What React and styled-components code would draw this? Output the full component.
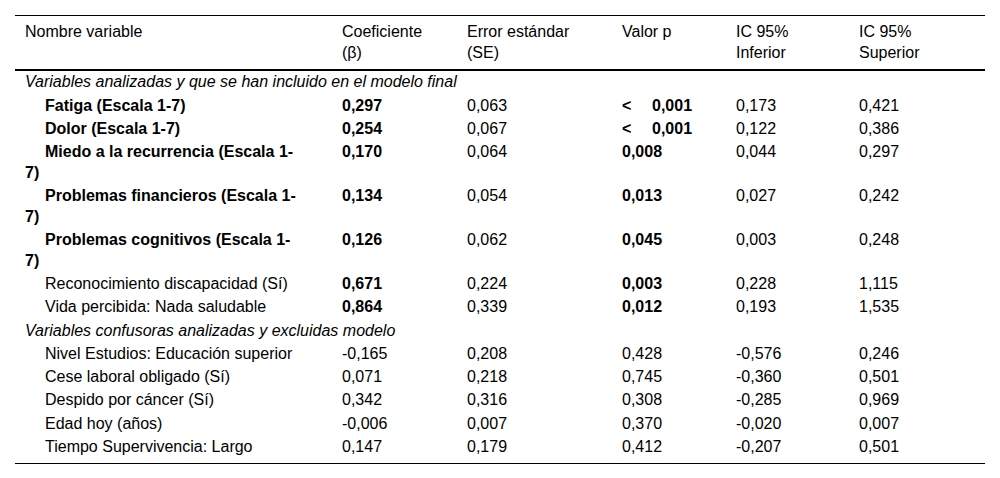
import React from 'react';
import styled, { createGlobalStyle } from 'styled-components';

const GlobalStyle = createGlobalStyle`
  html, body {
    margin: 0;
    padding: 0;
    background: #ffffff;
  }
  body {
    font-family: "Liberation Sans", Arial, sans-serif;
    color: #000000;
  }
`;

const Page = styled.div`
  padding: 15px 15px 0 15px;
  width: 1000px;
  box-sizing: border-box;
`;

const Table = styled.table`
  width: 970px;
  border-collapse: collapse;
  table-layout: fixed;
  font-size: 16px;
  line-height: 20.75px;
  border-top: 1px solid #000;
  border-bottom: 1px solid #000;
`;

const HeadCell = styled.th`
  text-align: left;
  font-weight: normal;
  vertical-align: top;
  padding: 5px 10px 6px 10px;
  border-bottom: 2px solid #000;
  line-height: 21px;
`;

const Cell = styled.td`
  vertical-align: top;
  padding: 1.25px 10px;
  font-weight: ${(p) => (p.$bold ? 'bold' : 'normal')};
  text-indent: ${(p) => (p.$indent ? '20px' : '0')};
  padding-right: ${(p) => (p.$indent ? '31px' : '10px')};
  white-space: ${(p) => (p.$nowrap ? 'nowrap' : 'normal')};
`;

const GroupCell = styled.td`
  font-style: italic;
  padding: 1.25px 10px;
  white-space: nowrap;
`;

const LastRow = styled.tr`
  td {
    padding-bottom: 5px;
  }
`;

const Less = styled.span`
  display: inline-block;
  width: 30px;
  text-indent: 0;
`;

const widths = [317, 125, 155, 114, 123, 136];

const finalRows = [
  { name: 'Fatiga (Escala 1-7)', b: true, coef: '0,297', se: '0,063', p: '0,001', lt: true, lo: '0,173', hi: '0,421' },
  { name: 'Dolor (Escala 1-7)', b: true, coef: '0,254', se: '0,067', p: '0,001', lt: true, lo: '0,122', hi: '0,386' },
  { name: 'Miedo a la recurrencia (Escala 1-7)', b: true, coef: '0,170', se: '0,064', p: '0,008', lo: '0,044', hi: '0,297' },
  { name: 'Problemas financieros (Escala 1-7)', b: true, coef: '0,134', se: '0,054', p: '0,013', lo: '0,027', hi: '0,242' },
  { name: 'Problemas cognitivos (Escala 1-7)', b: true, coef: '0,126', se: '0,062', p: '0,045', lo: '0,003', hi: '0,248' },
  { name: 'Reconocimiento discapacidad (Sí)', coef: '0,671', se: '0,224', p: '0,003', lo: '0,228', hi: '1,115' },
  { name: 'Vida percibida: Nada saludable', coef: '0,864', se: '0,339', p: '0,012', lo: '0,193', hi: '1,535' },
];

const excludedRows = [
  { name: 'Nivel Estudios: Educación superior', coef: '-0,165', se: '0,208', p: '0,428', lo: '-0,576', hi: '0,246' },
  { name: 'Cese laboral obligado (Sí)', coef: '0,071', se: '0,218', p: '0,745', lo: '-0,360', hi: '0,501' },
  { name: 'Despido por cáncer (Sí)', coef: '0,342', se: '0,316', p: '0,308', lo: '-0,285', hi: '0,969' },
  { name: 'Edad hoy (años)', coef: '-0,006', se: '0,007', p: '0,370', lo: '-0,020', hi: '0,007' },
  { name: 'Tiempo Supervivencia: Largo', coef: '0,147', se: '0,179', p: '0,412', lo: '-0,207', hi: '0,501' },
];

function DataCells({ r, significant }) {
  return (
    <>
      <Cell $indent $bold={r.b}>{r.name}</Cell>
      <Cell $bold={significant}>{r.coef}</Cell>
      <Cell>{r.se}</Cell>
      <Cell $bold={significant} $nowrap>
        {r.lt && <Less>&lt;</Less>}
        {r.p}
      </Cell>
      <Cell>{r.lo}</Cell>
      <Cell>{r.hi}</Cell>
    </>
  );
}

export default function App() {
  return (
    <Page>
      <GlobalStyle />
      <Table>
        <colgroup>
          {widths.map((w, i) => (
            <col key={i} style={{ width: w }} />
          ))}
        </colgroup>
        <thead>
          <tr>
            <HeadCell>Nombre variable</HeadCell>
            <HeadCell>Coeficiente<br />(β)</HeadCell>
            <HeadCell>Error estándar<br />(SE)</HeadCell>
            <HeadCell>Valor p</HeadCell>
            <HeadCell>IC 95%<br />Inferior</HeadCell>
            <HeadCell>IC 95%<br />Superior</HeadCell>
          </tr>
        </thead>
        <tbody>
          <tr>
            <GroupCell colSpan={6}>Variables analizadas y que se han incluido en el modelo final</GroupCell>
          </tr>
          {finalRows.map((r) => (
            <tr key={r.name}>
              <DataCells r={r} significant />
            </tr>
          ))}
          <tr>
            <GroupCell colSpan={6}>Variables confusoras analizadas y excluidas modelo</GroupCell>
          </tr>
          {excludedRows.map((r, i) =>
            i === excludedRows.length - 1 ? (
              <LastRow key={r.name}>
                <DataCells r={r} />
              </LastRow>
            ) : (
              <tr key={r.name}>
                <DataCells r={r} />
              </tr>
            )
          )}
        </tbody>
      </Table>
    </Page>
  );
}
